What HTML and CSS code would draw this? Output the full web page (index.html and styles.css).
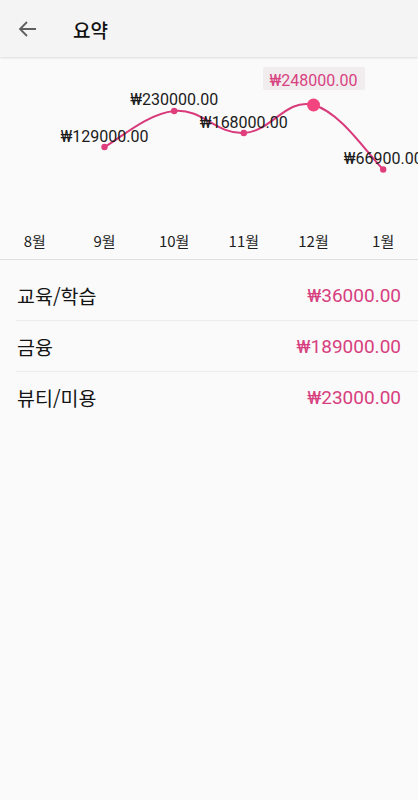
FILE: index.html
```html
<!DOCTYPE html>
<html lang="ko">
<head>
<meta charset="utf-8">
<title>요약</title>
<link rel="stylesheet" href="styles.css">
</head>
<body>
<header class="appbar">
  <button class="back" aria-label="뒤로">
    <svg width="24" height="24" viewBox="0 0 24 24"><path d="M20 12H4.5M11 5l-7 7 7 7" fill="none" stroke="#5f5f5f" stroke-width="1.8"/></svg>
  </button>
  <h1 class="title">요약</h1>
</header>
<section class="chart">
  <svg class="plot" width="418" height="164" viewBox="0 0 418 164">
    <path class="line" d="M104.5 90 C118.44 82.8 146.34 56.8 174.2 54 C202.06 51.2 215.94 77.2 243.8 76 C271.66 74.8 285.62 40.7 313.5 48 C341.38 55.3 369.26 99.6 383.2 112.5"/>
    <circle class="dot" cx="104.5" cy="90" r="3.2"/>
    <circle class="dot" cx="174.2" cy="54" r="3.2"/>
    <circle class="dot" cx="243.8" cy="76" r="3.2"/>
    <circle class="dot big" cx="313.5" cy="48" r="6.5"/>
    <circle class="dot" cx="383.2" cy="112.5" r="3.2"/>
    <text class="val" x="104.5" y="85">₩129000.00</text>
    <text class="val" x="174.2" y="48">₩230000.00</text>
    <text class="val" x="243.8" y="71">₩168000.00</text>
    <rect class="tip" x="263" y="10" width="102" height="23" rx="2"/>
    <text class="val hl" x="313.5" y="28.5">₩248000.00</text>
    <text class="val" x="383.2" y="107">₩66900.00</text>
  </svg>
  <div class="months">
    <span>8월</span><span>9월</span><span>10월</span><span>11월</span><span>12월</span><span>1월</span>
  </div>
</section>
<ul class="list">
  <li class="row"><span class="cat">교육/학습</span><span class="amt">₩36000.00</span></li>
  <li class="row"><span class="cat">금융</span><span class="amt">₩189000.00</span></li>
  <li class="row"><span class="cat">뷰티/미용</span><span class="amt">₩23000.00</span></li>
</ul>
</body>
</html>
```
FILE: styles.css
```css
html, body {
  margin: 0;
  padding: 0;
  background: #fafafa;
  font-family: Roboto, "Noto Sans CJK KR", sans-serif;
  color: #1e1e1e;
}
.appbar {
  height: 57px;
  background: #f4f4f4;
  display: flex;
  align-items: center;
  box-shadow: 0 1px 2px rgba(0,0,0,0.12);
  position: relative;
}
.back {
  border: 0;
  background: none;
  padding: 0;
  margin-left: 16px;
  width: 24px;
  height: 24px;
  display: flex;
}
.title {
  margin: 0 0 0 33px;
  font-family: "Noto Sans CJK KR", sans-serif;
  font-size: 19px;
  font-weight: 500;
  color: #111;
  padding-top: 1px;
}
.chart {
  border-bottom: 1px solid #dedede;
}
.plot {
  display: block;
}
.line {
  fill: none;
  stroke: #d83a7b;
  stroke-width: 2;
}
.dot {
  fill: #e03d7d;
}
.dot.big {
  fill: #f2447f;
}
.val {
  font-family: Roboto, "Noto Sans CJK KR", sans-serif;
  font-size: 16px;
  fill: #1b1b1b;
  text-anchor: middle;
}
.val.hl {
  fill: #d8427f;
}
.tip {
  fill: #f1edef;
}
.months {
  display: grid;
  grid-template-columns: repeat(6, 1fr);
  height: 38px;
  align-items: center;
  text-align: center;
  font-family: "Noto Sans CJK KR", sans-serif;
  font-size: 15px;
  color: #1e1e1e;
}
.list {
  list-style: none;
  margin: 0;
  padding: 10px 0 0 16px;
}
.row {
  height: 50px;
  display: flex;
  align-items: center;
  justify-content: space-between;
  padding-right: 17px;
  border-bottom: 1px solid #ececec;
}
.row:last-child {
  border-bottom: 0;
}
.cat {
  font-family: "Noto Sans CJK KR", sans-serif;
  font-size: 19.5px;
  color: #141414;
  padding-left: 1px;
}
.amt {
  font-family: Roboto, "Noto Sans CJK KR", sans-serif;
  font-size: 19px;
  color: #d6407f;
}
```
